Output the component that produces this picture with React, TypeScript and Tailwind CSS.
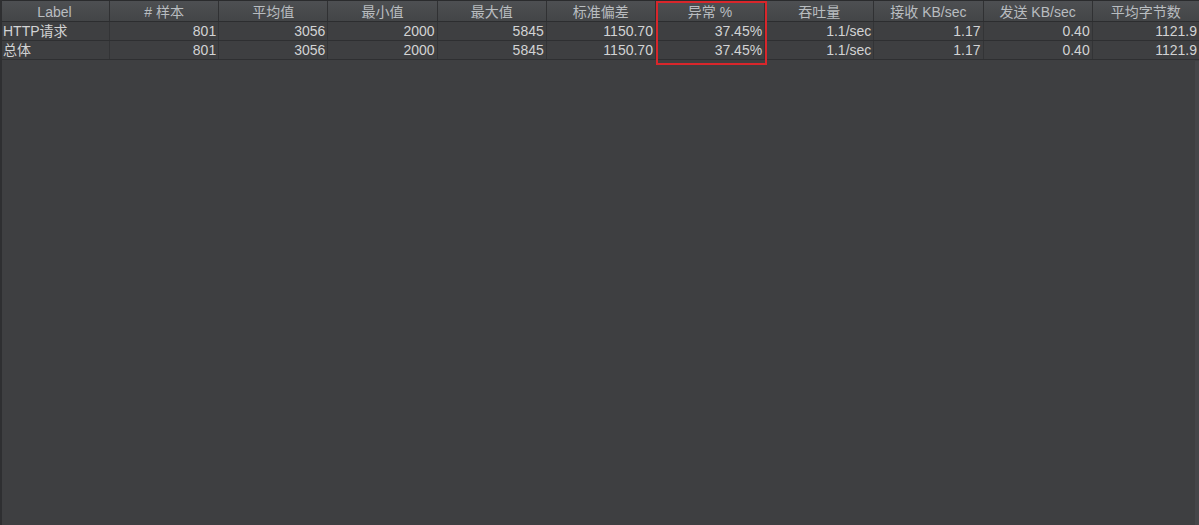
import React from 'react';

const headers = ['Label', '# 样本', '平均值', '最小值', '最大值', '标准偏差', '异常 %', '吞吐量', '接收 KB/sec', '发送 KB/sec', '平均字节数'];

const rows = [
  ['HTTP请求', '801', '3056', '2000', '5845', '1150.70', '37.45%', '1.1/sec', '1.17', '0.40', '1121.9'],
  ['总体', '801', '3056', '2000', '5845', '1150.70', '37.45%', '1.1/sec', '1.17', '0.40', '1121.9'],
];

const font = { fontFamily: '"Liberation Sans", "Noto Sans CJK SC", sans-serif' };

const App: React.FC = () => {
  return (
    <div className="w-[1199px] h-[525px] bg-[#3e3f41] relative overflow-hidden" style={font}>
      {/* header */}
      <div className="grid grid-cols-[110px_repeat(9,109.2px)_1fr] h-[22px] border-t border-t-[#2a2b2d] border-b border-b-[#2c2d2f] bg-gradient-to-b from-[#4d4f52] to-[#434547]">
        {headers.map((h, i) => (
          <div
            key={h}
            className={`flex items-center justify-center pt-[1px] text-[14px] text-[#b9bdc0] leading-none ${i < 10 ? 'border-r border-r-[#303133]' : ''}`}
          >
            {h}
          </div>
        ))}
      </div>

      {/* rows */}
      {rows.map((row, ri) => (
        <div key={ri} className="grid grid-cols-[110px_repeat(9,109.2px)_1fr] h-[19px] border-b border-b-[#2e2f31]">
          {row.map((cell, ci) => (
            <div
              key={ci}
              className={`flex items-center text-[14px] text-[#d2d3d4] leading-none ${ci < 10 ? 'border-r border-r-[#333436]' : ''} ${ci === 0 ? 'justify-start pl-[3px]' : 'justify-end pr-[2px]'}`}
            >
              {cell}
            </div>
          ))}
        </div>
      ))}

      {/* pane edges */}
      <div className="absolute left-0 top-0 bottom-0 w-[2px] bg-[#2e2f31]" />
      <div className="absolute right-0 top-[61px] bottom-0 w-[4px] bg-[#454649]" />

      {/* highlight box */}
      <div className="absolute left-[656px] top-[1px] w-[111px] h-[64px] border-2 border-[#d9262b]" />
    </div>
  );
};

export default App;
